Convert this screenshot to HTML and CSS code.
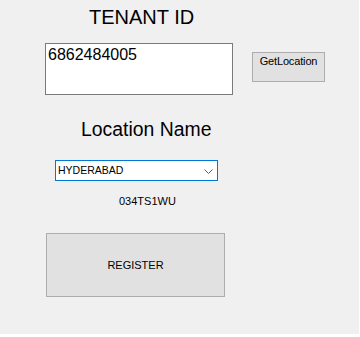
FILE: index.html
```html
<!DOCTYPE html>
<html>
<head>
<meta charset="utf-8">
<link rel="stylesheet" href="styles.css">
</head>
<body>
<div class="form">
  <h1 class="title tenant">TENANT ID</h1>
  <div class="id-row">
    <div class="textbox">6862484005</div>
    <button class="btn get">GetLocation</button>
  </div>
  <h2 class="title loc">Location Name</h2>
  <div class="combo">
    <span class="combo-text">HYDERABAD</span>
    <svg class="chev" width="9" height="5" viewBox="0 0 9 5"><polyline points="0.5,0.5 4.5,4.5 8.5,0.5" fill="none" stroke="#5f5f5f" stroke-width="1"/></svg>
  </div>
  <div class="code">034TS1WU</div>
  <button class="btn register">REGISTER</button>
</div>
</body>
</html>
```
FILE: styles.css
```css
html, body {
  margin: 0;
  padding: 0;
  background: #ffffff;
}
.form {
  width: 359px;
  height: 334px;
  box-sizing: border-box;
  padding-top: 6px;
  background: #f0f0f0;
  font-family: "Liberation Sans", Arial, sans-serif;
  color: #000;
  overflow: hidden;
}
.title {
  margin: 0;
  font-weight: normal;
  font-size: 20px;
  line-height: 23px;
}
.tenant {
  margin-left: 89px;
}
.id-row {
  display: flex;
  align-items: flex-start;
  gap: 19px;
  margin-top: 14px;
  margin-left: 45px;
}
.textbox {
  width: 188px;
  height: 52px;
  box-sizing: border-box;
  border: 1px solid #7a7a7a;
  background: #fff;
  font-size: 16px;
  line-height: 18px;
  padding: 2px 2px;
}
.btn {
  box-sizing: border-box;
  border: 1px solid #adadad;
  background: #e1e1e1;
  font-family: "Liberation Sans", Arial, sans-serif;
  font-size: 11px;
  line-height: 13px;
  color: #000;
  border-radius: 0;
  margin: 0;
}
.get {
  width: 73px;
  height: 30px;
  margin-top: 9px;
  display: flex;
  justify-content: center;
  align-items: flex-start;
  padding: 2px 0 0;
  letter-spacing: -0.15px;
}
.loc {
  margin-top: 23px;
  margin-left: 81px;
  font-size: 19.4px;
}
.combo {
  width: 163px;
  height: 21px;
  box-sizing: border-box;
  margin-top: 19px;
  margin-left: 55px;
  border: 1px solid #0078d7;
  background: #fff;
  display: flex;
  align-items: center;
  justify-content: space-between;
  padding: 0 4px 0 2px;
  font-size: 10.5px;
  line-height: 13px;
}
.chev {
  display: block;
  margin-top: 1px;
}
.code {
  margin-top: 14px;
  margin-left: 119px;
  font-size: 11px;
  line-height: 13px;
}
.register {
  display: block;
  width: 179px;
  height: 64px;
  margin-top: 25px;
  margin-left: 46px;
  padding: 0;
  text-align: center;
}
```
